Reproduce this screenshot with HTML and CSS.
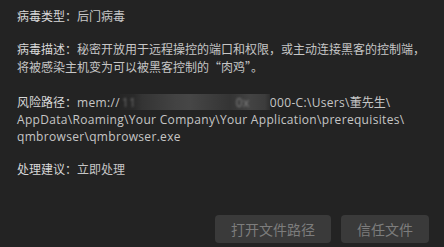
FILE: index.html
```html
<!DOCTYPE html>
<html lang="zh-CN">
<head>
<meta charset="utf-8">
<link rel="stylesheet" href="styles.css">
</head>
<body>
<div class="panel">
  <div class="info">
    <p class="row"><span class="label">病毒类型：</span><span class="value">后门病毒</span></p>
    <p class="row"><span class="label">病毒描述：</span><span class="value">秘密开放用于远程操控的端口和权限，或主动连接黑客的控制端，</span><br><span class="value">将被感染主机变为可以被黑客控制的<span class="cjk">“肉鸡”</span>。</span></p>
    <p class="row path"><span class="label">风险路径：</span><span class="value latin">mem://<span class="mask"><span class="m1">11</span><span class="m2">0x</span></span>000-C:\Users\<span class="cjk">董先生</span>\</span><br><span class="value latin">AppData\Roaming\Your Company\Your Application\prerequisites\</span><br><span class="value latin">qmbrowser\qmbrowser.exe</span></p>
    <p class="row"><span class="label">处理建议：</span><span class="value">立即处理</span></p>
  </div>
  <div class="actions">
    <button class="btn">打开文件路径</button>
    <button class="btn">信任文件</button>
  </div>
</div>
</body>
</html>
```
FILE: styles.css
```css
html, body {
  margin: 0;
  padding: 0;
  background: #232323;
}
.panel {
  width: 444px;
  height: 247px;
  box-sizing: border-box;
  display: flex;
  flex-direction: column;
  justify-content: space-between;
  padding: 8px 15px 4px 17px;
  font-family: "Open Sans", "Noto Sans CJK SC", sans-serif;
  font-size: 12px;
  line-height: 17px;
}
.info {
  display: flex;
  flex-direction: column;
  gap: 16px;
}
.row {
  margin: 0;
  white-space: nowrap;
}
.path {
  margin-top: 1px;
}
.label {
  color: #d8d8d8;
}
.value {
  color: #c6c6c6;
}
.latin {
  letter-spacing: 0.32px;
}
.cjk {
  font-family: "Noto Sans CJK SC", sans-serif;
  letter-spacing: 0;
}
.mask {
  display: inline-block;
  position: relative;
  width: 150px;
  height: 16px;
  vertical-align: -3px;
  background: linear-gradient(90deg,
    #262626 0px, #2a2a2a 14px, #343434 22px, #3c3c3c 40px, #434343 56px,
    #464646 70px, #3d3d3d 90px, #343434 110px, #383838 116px, #434343 130px,
    #3c3c3c 145px, #2e2e2e 150px);
  filter: blur(0.6px);
}
.m1, .m2 {
  position: absolute;
  top: 0;
  color: #6f6f6f;
  filter: blur(0.8px);
}
.m1 { left: 2px; }
.m2 { left: 116px; color: #858585; }
.actions {
  display: flex;
  justify-content: flex-end;
  gap: 10px;
}
.btn {
  height: 28px;
  padding: 0 16px;
  border: none;
  border-radius: 4px;
  background: #3a3a3a;
  color: #7d7d7d;
  font-family: "Noto Sans CJK SC", sans-serif;
  font-size: 14px;
  line-height: 28px;
}
```
